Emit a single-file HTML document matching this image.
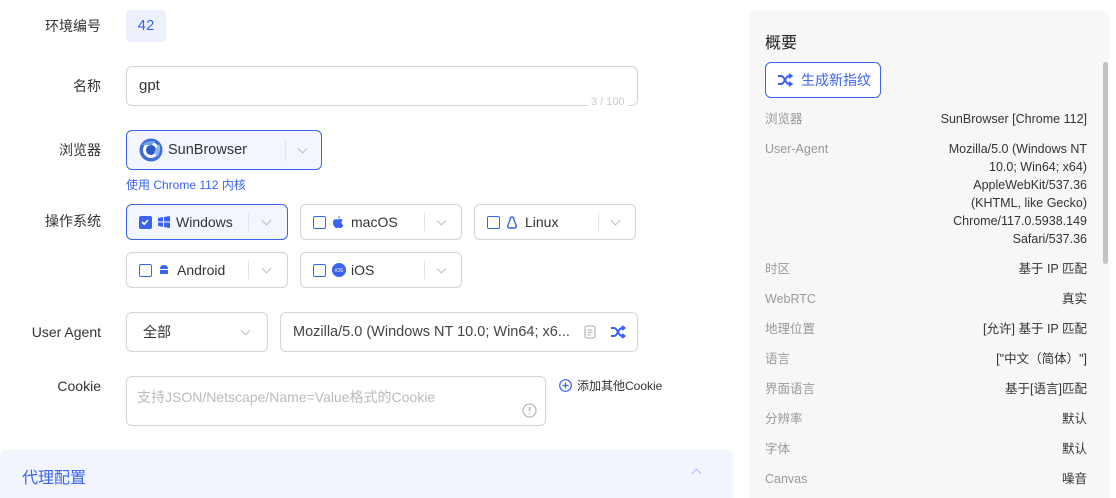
<!DOCTYPE html>
<html><head><meta charset="utf-8"><style>
*{box-sizing:border-box;margin:0;padding:0}
html,body{width:1116px;height:498px;overflow:hidden}
body{background:#fff;font-family:"Liberation Sans","Noto Sans CJK SC",sans-serif;color:#333;position:relative;font-size:14px}
.a{position:absolute}
.lbl{position:absolute;right:1015px;font-size:14px;color:#333;white-space:nowrap;line-height:18px}
.box{position:absolute;border:1px solid #d3d4d8;border-radius:6px;background:#fff}
.sel{display:flex;align-items:center;padding-left:12px;font-size:14px;color:#333}
.chk{width:13px;height:13px;border:1.5px solid #3a63f3;border-radius:2px;margin-right:6px;flex:none}
.div{position:absolute;top:8px;bottom:8px;width:1px;background:#e2e3e6}
.chev{position:absolute;top:50%;width:7px;height:7px;border-right:1.3px solid #b8bbc4;border-bottom:1.3px solid #b8bbc4;transform:translateY(-70%) rotate(45deg)}
.row{position:absolute;left:765px;width:322px;font-size:12.5px;display:flex;justify-content:space-between;align-items:flex-start;line-height:18px}
.row span{display:block;line-height:18px}
.row span:first-child{color:#999}
.row span:last-child{color:#333;text-align:right}
</style></head><body>
<div class="lbl" style="top:17px">环境编号</div>
<div class="a" style="left:126px;top:10px;width:40px;height:32px;background:#edf1fd;border-radius:4px;color:#3a63f3;font-size:15px;text-align:center;line-height:32px">42</div>

<div class="lbl" style="top:77px">名称</div>
<div class="box" style="left:126px;top:66px;width:512px;height:40px;padding:0 12px;line-height:38px;font-size:15px">gpt</div>
<div class="a" style="left:588px;top:96px;background:#fff;color:#ccc;font-size:11px;padding:0 3px;height:10px;overflow:hidden">3 / 100</div>

<div class="lbl" style="top:141px">浏览器</div>
<div class="box sel" style="left:126px;top:130px;width:196px;height:40px;border-color:#3a63f3;background:#f3f6fe">
<svg width="24" height="24" viewBox="0 0 24 24" style="margin-right:5px"><circle cx="12" cy="12" r="11.5" fill="#3b6fd6"/><circle cx="12" cy="12" r="8" fill="#fff"/><circle cx="12" cy="12" r="5" fill="#2a58c8"/><path d="M3 7 Q8 2 16 3 L13 7 Z" fill="#6fa3f0"/><path d="M20 6 Q23 12 18 19 L15 14 Z" fill="#8bb8f5"/></svg>
<span style="font-size:14.5px">SunBrowser</span>
<div class="div" style="left:158px"></div><div class="chev" style="left:172px"></div></div>
<div class="a" style="left:126px;top:176px;font-size:12px;color:#3a63f3">使用 Chrome 112 内核</div>

<div class="lbl" style="top:212px">操作系统</div>
<div class="box sel" style="left:126px;top:204px;width:162px;height:36px;border-color:#3a63f3;background:#f3f6fe"><div class="chk" style="background:#3a63f3;position:relative"><svg width="10" height="10" viewBox="0 0 10 10" style="position:absolute;left:0;top:0"><path d="M2 5 L4.2 7.2 L8 3" stroke="#fff" stroke-width="1.6" fill="none"/></svg></div><svg width="12" height="12" viewBox="0 0 12 12" style="margin-right:6px"><path d="M0 2 L5 1 V5.5 H0Z M6 1 L12 0 V5.5 H6Z M0 6.5 H5 V11 L0 10Z M6 6.5 H12 V12 L6 11Z" fill="#3a63f3"/></svg>Windows<div class="div" style="left:121px"></div><div class="chev" style="left:136px"></div></div>
<div class="box sel" style="left:300px;top:204px;width:162px;height:36px"><div class="chk"></div><svg width="12" height="14" viewBox="0 0 12 14" style="margin-right:7px"><path d="M8 1 Q8 3 6.2 3.6 Q6 2 8 1Z M6 4.6 Q7.5 3.8 9 4 Q10.2 4.3 10.8 5.3 Q9.3 6.3 9.5 8 Q9.8 9.6 11.3 10 Q10.5 12.5 9 13 Q8.2 13.3 7 12.8 Q6 12.5 5 12.9 Q3.8 13.3 3 12.4 Q0.5 9.5 1 6.8 Q1.5 4.2 4 4.1 Q5 4.1 6 4.6Z" fill="#3a63f3"/></svg>macOS<div class="div" style="left:123px"></div><div class="chev" style="left:137px"></div></div>
<div class="box sel" style="left:474px;top:204px;width:162px;height:36px"><div class="chk"></div><svg width="12" height="13" viewBox="0 0 12 13" style="margin-right:7px"><path d="M6 1 Q8 1 8 4 L10 9 Q11 11 9 12 H3 Q1 11 2 9 L4 4 Q4 1 6 1Z" fill="none" stroke="#3a63f3" stroke-width="1.4"/></svg>Linux<div class="div" style="left:123px"></div><div class="chev" style="left:137px"></div></div>
<div class="box sel" style="left:126px;top:252px;width:162px;height:36px"><div class="chk"></div><svg width="12" height="12" viewBox="0 0 12 12" style="margin-right:7px"><path d="M2 5 Q2 1 6 1 Q10 1 10 5Z M2 6 H10 V10 H2Z" fill="#3a63f3"/></svg>Android<div class="div" style="left:121px"></div><div class="chev" style="left:136px"></div></div>
<div class="box sel" style="left:300px;top:252px;width:162px;height:36px"><div class="chk"></div><svg width="14" height="14" viewBox="0 0 14 14" style="margin-right:5px"><circle cx="7" cy="7" r="7" fill="#3a63f3"/><text x="7" y="9" font-size="5" fill="#fff" text-anchor="middle" font-family="Liberation Sans">iOS</text></svg>iOS<div class="div" style="left:123px"></div><div class="chev" style="left:137px"></div></div>

<div class="lbl" style="top:323px">User Agent</div>
<div class="box sel" style="left:126px;top:312px;width:142px;height:40px;padding-left:16px">全部<div class="chev" style="left:115px"></div></div>
<div class="box sel" style="left:280px;top:312px;width:358px;height:40px;font-size:14.5px;color:#444">Mozilla/5.0 (Windows NT 10.0; Win64; x6...
<svg width="12" height="14" viewBox="0 0 12 14" style="position:absolute;left:303px;top:12px"><rect x="1" y="1" width="10" height="12" rx="2" fill="none" stroke="#bbb" stroke-width="1.3"/><path d="M3.5 5H8.5M3.5 7.5H8.5M3.5 10H7" stroke="#bbb" stroke-width="1.2"/></svg>
<svg width="16" height="14" viewBox="0 0 16 14" style="position:absolute;left:329px;top:12px"><path d="M1 3H4Q6 3 8 7Q10 11 12 11H14M1 11H4Q6 11 8 7Q10 3 12 3H14M12 1L14.5 3L12 5M12 9L14.5 11L12 13" fill="none" stroke="#3a63f3" stroke-width="2"/></svg></div>

<div class="lbl" style="top:377px">Cookie</div>
<div class="box" style="left:126px;top:376px;width:420px;height:50px;padding:10px 10px;font-size:14px;color:#bbb">支持JSON/Netscape/Name=Value格式的Cookie
<svg width="15" height="15" viewBox="0 0 15 15" style="position:absolute;left:395px;top:26px"><circle cx="7.5" cy="7.5" r="6.5" fill="none" stroke="#bbb" stroke-width="1.3"/><path d="M7.5 4V8.5M7.5 10V11" stroke="#bbb" stroke-width="1.5"/></svg></div>
<div class="a" style="left:559px;top:377px;font-size:12px;color:#333;display:flex;align-items:center"><svg width="13" height="13" viewBox="0 0 13 13" style="margin-right:5px"><circle cx="6.5" cy="6.5" r="5.8" fill="none" stroke="#3a63f3" stroke-width="1.2"/><path d="M6.5 3.5V9.5M3.5 6.5H9.5" stroke="#3a63f3" stroke-width="1.3"/></svg>添加其他Cookie</div>

<div class="a" style="left:0;top:450px;width:733px;height:48px;background:#f2f5fe;border-radius:6px 6px 0 0"><div class="a" style="left:22px;top:14px;font-size:16px;color:#3a63f3">代理配置</div><div class="a" style="left:693px;top:20px;width:7px;height:7px;border-left:1.3px solid #a9b7ee;border-top:1.3px solid #a9b7ee;transform:rotate(45deg)"></div></div>

<div class="a" style="left:749px;top:10px;width:360px;height:500px;background:#f7f7f8;border-radius:8px"></div>
<div class="a" style="left:1103px;top:62px;width:5px;height:202px;background:#c0c2c8;border-radius:3px"></div>
<div class="a" style="left:765px;top:29px;font-size:16px;color:#222">概要</div>
<div class="a" style="left:765px;top:62px;width:116px;height:36px;border:1px solid #3a63f3;border-radius:6px;background:#fff;display:flex;align-items:center;padding-left:11px;font-size:14px;color:#3a63f3"><svg width="16" height="14" viewBox="0 0 16 14" style="margin-right:8px"><path d="M1 3H4Q6 3 8 7Q10 11 12 11H14M1 11H4Q6 11 8 7Q10 3 12 3H14M12 1L14.5 3L12 5M12 9L14.5 11L12 13" fill="none" stroke="#3a63f3" stroke-width="2"/></svg>生成新指纹</div>
<div class="row" style="top:110px"><span>浏览器</span><span>SunBrowser [Chrome 112]</span></div>
<div class="row" style="top:140px"><span>User-Agent</span><span>Mozilla/5.0 (Windows NT<br>10.0; Win64; x64)<br>AppleWebKit/537.36<br>(KHTML, like Gecko)<br>Chrome/117.0.5938.149<br>Safari/537.36</span></div>
<div class="row" style="top:260px"><span>时区</span><span>基于 IP 匹配</span></div>
<div class="row" style="top:290px"><span>WebRTC</span><span>真实</span></div>
<div class="row" style="top:320px"><span>地理位置</span><span>[允许] 基于 IP 匹配</span></div>
<div class="row" style="top:350px"><span>语言</span><span>["中文（简体）"]</span></div>
<div class="row" style="top:380px"><span>界面语言</span><span>基于[语言]匹配</span></div>
<div class="row" style="top:410px"><span>分辨率</span><span>默认</span></div>
<div class="row" style="top:440px"><span>字体</span><span>默认</span></div>
<div class="row" style="top:470px"><span>Canvas</span><span>噪音</span></div>
</body></html>
